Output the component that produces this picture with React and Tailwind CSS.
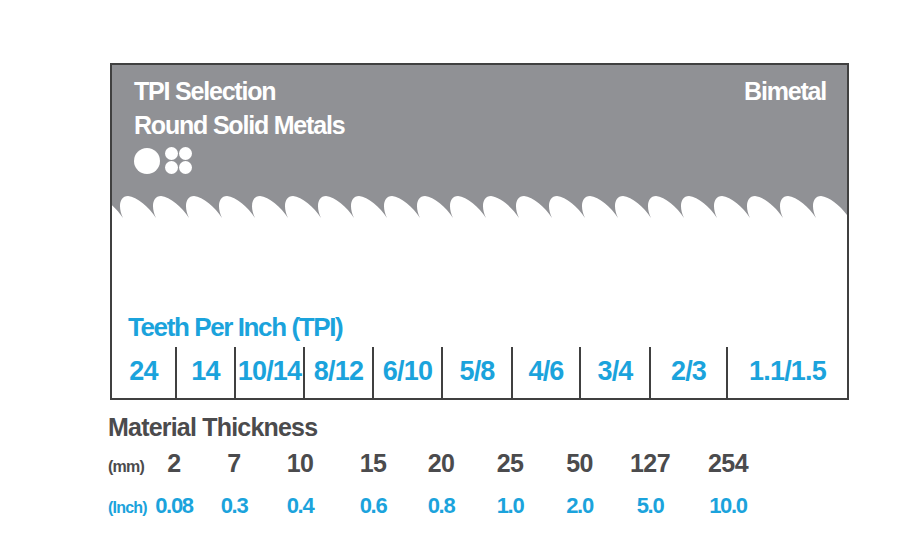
import React from "react";

const tpi = [
    { label: "24", w: "w-[63px]" },
    { label: "14", w: "w-[59px]" },
    { label: "10/14", w: "w-[69px]" },
    { label: "8/12", w: "w-[69px]" },
    { label: "6/10", w: "w-[69px]" },
    { label: "5/8", w: "w-[70px]" },
    { label: "4/6", w: "w-[68px]" },
    { label: "3/4", w: "w-[70px]" },
    { label: "2/3", w: "w-[77px]" },
    { label: "1.1/1.5", w: "w-[121px]" },
];

const mm = ["2", "7", "10", "15", "20", "25", "50", "127", "254"];
const inch = ["0.08", "0.3", "0.4", "0.6", "0.8", "1.0", "2.0", "5.0", "10.0"];

// saw teeth edge of the grey band, valleys every 33px
const teethPath = () => {
    let d = "M-40,0 L-22,28";
    for (let k = -2; k <= 20; k++) {
        const v = 44 + 33 * k;
        d += ` C${v - 5},18 ${v - 4},6 ${v + 5},6`;
        d += ` C${v + 14},7 ${v + 26},17 ${v + 33},28`;
    }
    d += " L760,28 L760,0 Z";
    return d;
};

const Teeth = () => (
    <svg width="735" height="30" viewBox="0 0 735 30" className="block">
        <path d={teethPath()} fill="#909195" />
    </svg>
);

const Dots = () => (
    <div className="flex items-center gap-[5px] mt-[5px]">
        <div className="w-[26px] h-[26px] rounded-full bg-white"></div>
        <div className="grid grid-cols-2 gap-[1px]">
            <div className="w-[13px] h-[13px] rounded-full bg-white"></div>
            <div className="w-[13px] h-[13px] rounded-full bg-white"></div>
            <div className="w-[13px] h-[13px] rounded-full bg-white"></div>
            <div className="w-[13px] h-[13px] rounded-full bg-white"></div>
        </div>
    </div>
);

const Numbers = "grid grid-cols-[40px_52px_68px_64px_82px_54px_84px_55px_86px_70px] items-baseline";

const App = () => {
    return (
        <div className="w-[905px] h-[558px] bg-white font-['Liberation_Sans',Arial,sans-serif] font-bold pt-[63px]">
            <div className="ml-[110px] w-[739px] h-[337px] border-2 border-[#404040] flex flex-col">
                <div className="bg-[#909195] h-[125px] pt-[9px] pl-[22px] pr-[21px] text-white text-[25px] leading-[34px] tracking-[-1.2px] flex justify-between">
                    <div>
                        <div>TPI Selection</div>
                        <div>Round Solid Metals</div>
                        <Dots />
                    </div>
                    <div>Bimetal</div>
                </div>
                <Teeth />
                <div className="mt-auto">
                    <div className="pl-[16px] text-[#1ba3dc] text-[26px] leading-[30px] tracking-[-1.4px]">
                        Teeth Per Inch (TPI)
                    </div>
                    <div className="flex mt-[5px] h-[51px]">
                        {tpi.map((c, i) => (
                            <div
                                key={c.label}
                                className={`${c.w} ${i > 0 ? "border-l-2 border-[#404040]" : ""} flex items-center justify-center pb-[2px] text-[#1ba3dc] text-[27px] tracking-[-0.8px]`}>
                                {c.label}
                            </div>
                        ))}
                    </div>
                </div>
            </div>

            <div className="ml-[108px] mt-[13px]">
                <div className="text-[#4b4b4d] text-[25px] leading-[28px] tracking-[-0.8px]">Material Thickness</div>
                <div className={`${Numbers} mt-[7px] leading-[30px] text-[#4b4b4d]`}>
                    <div className="text-[16px] tracking-[-0.8px]">(mm)</div>
                    {mm.map((n) => (
                        <div key={n} className="text-center text-[25px] tracking-[-0.6px]">{n}</div>
                    ))}
                </div>
                <div className={`${Numbers} mt-[9px] leading-[30px] text-[#1ba3dc]`}>
                    <div className="text-[16px] tracking-[-0.8px]">(Inch)</div>
                    {inch.map((n) => (
                        <div key={n} className="text-center text-[22px] tracking-[-1.3px]">{n}</div>
                    ))}
                </div>
            </div>
        </div>
    );
};

export default App;
